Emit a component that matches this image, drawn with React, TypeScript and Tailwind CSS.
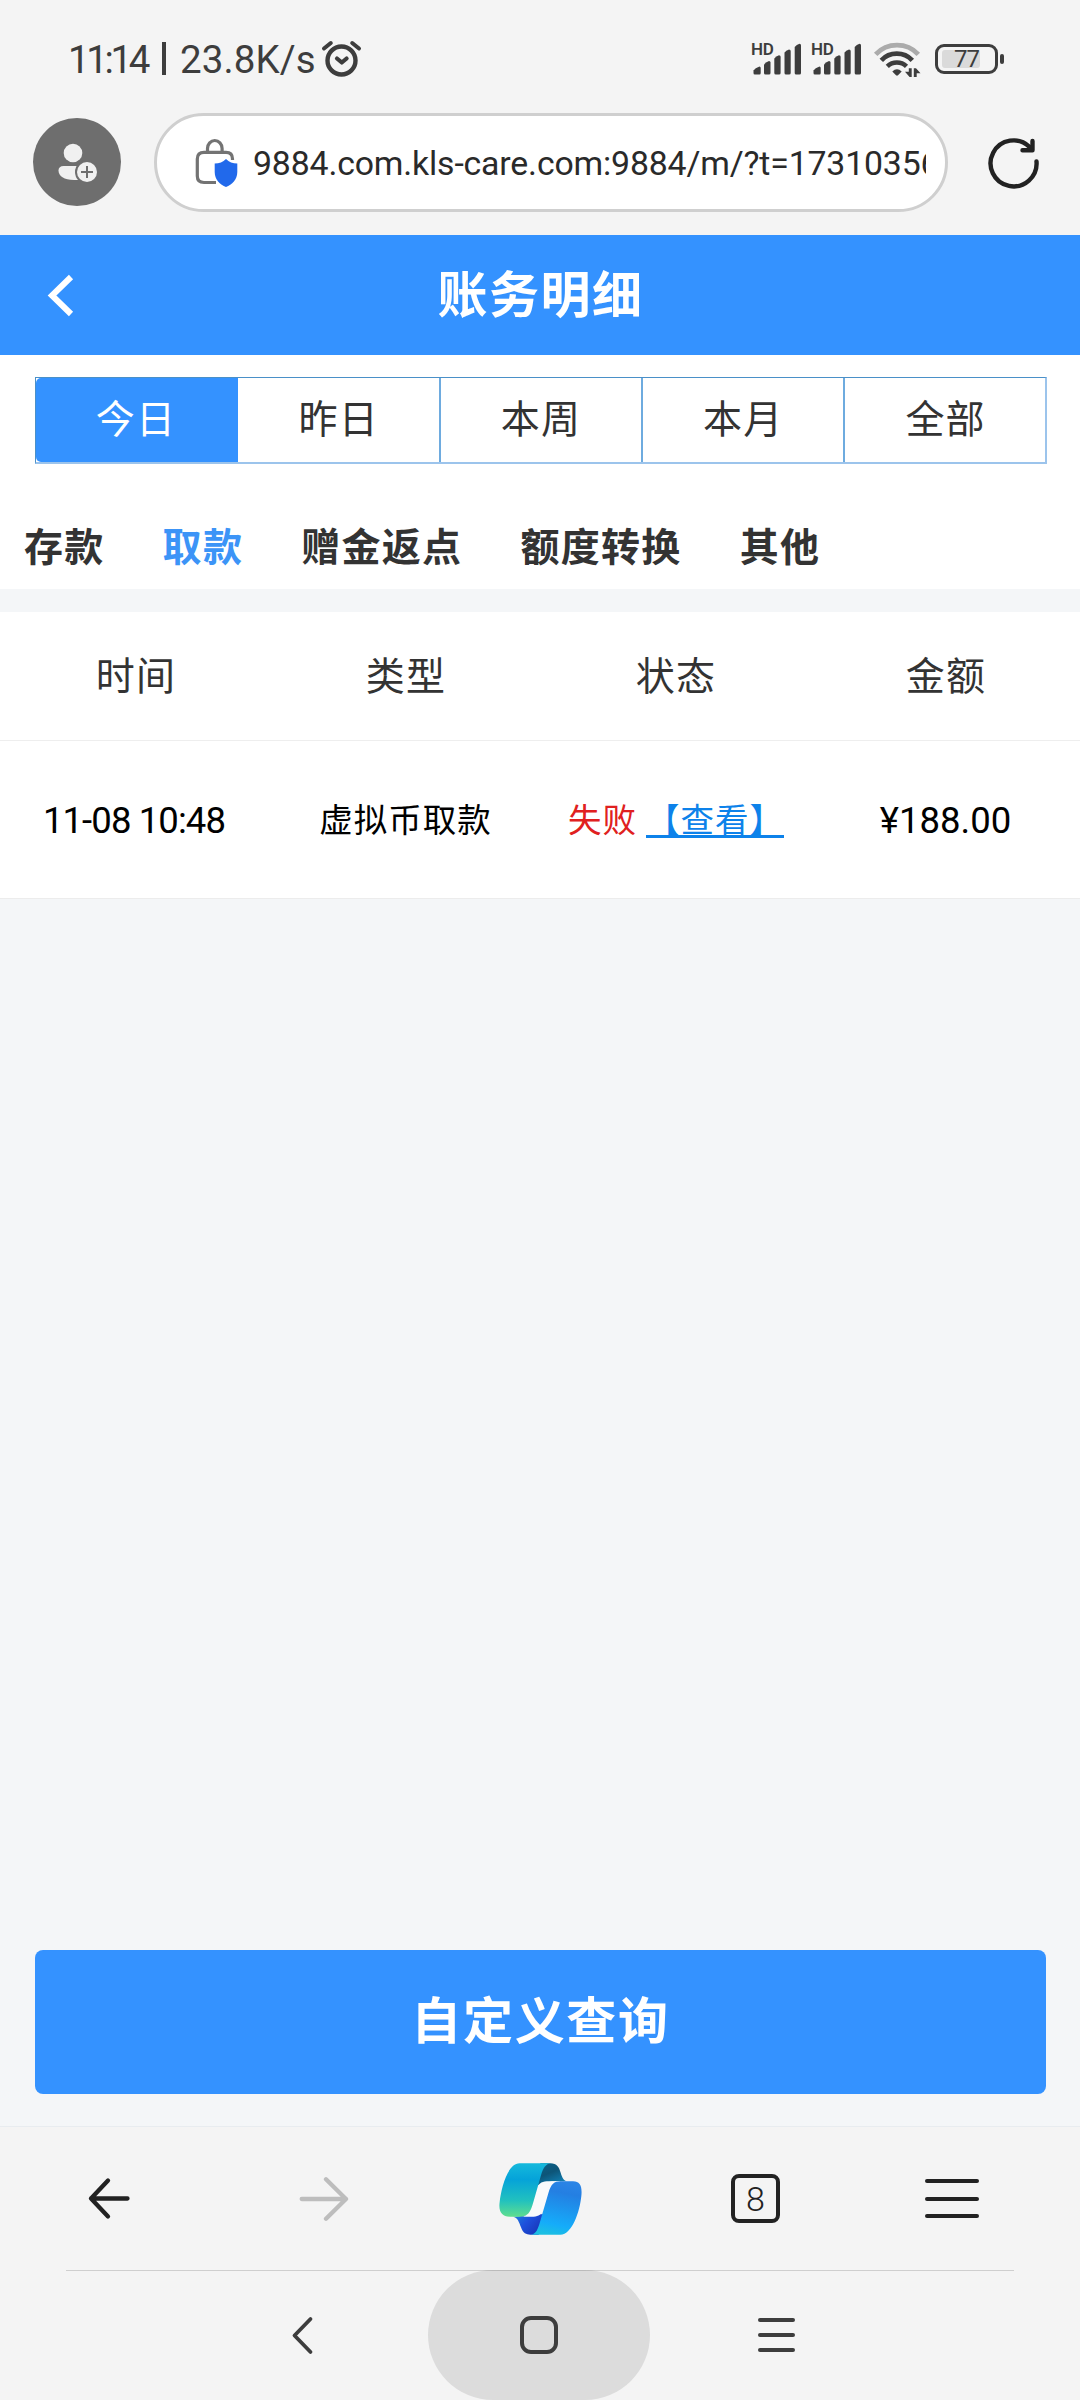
import React from "react";

const periods = ["今日", "昨日", "本周", "本月", "全部"];
const categories = ["存款", "取款", "赠金返点", "额度转换", "其他"];
const columns = ["时间", "类型", "状态", "金额"];

const periodStyles = [
  "rounded-l-[5px] bg-[#3492ff] pr-[2px] text-white",
  "text-[#333]",
  "-ml-px border-l-2 border-[#6eabdf] text-[#333]",
  "border-l-2 border-[#6eabdf] text-[#333]",
  "border-l-2 border-[#6eabdf] pl-px text-[#333]",
];

function AlarmIcon() {
  return (
    <svg className="h-[38px] w-[42px]" viewBox="0 0 42 38" fill="none" stroke="#3d3d3d" strokeLinecap="round">
      <circle cx="20.500" cy="20.500" r="14" strokeWidth="4.400" />
      <path d="M3 8.500 L9.800 3 M31.200 3 L38 8.500" strokeWidth="4" />
      <path d="M16 18.500 L20.800 22.500 L25.600 18.500" strokeWidth="4.200" strokeLinejoin="round" />
    </svg>
  );
}

function SignalIcon() {
  return (
    <div className="relative h-[34px] w-[60px] shrink-0">
      <span className="absolute left-0 top-0 text-[17px] font-semibold leading-[14px] tracking-[-0.2px]">HD</span>
      <svg className="h-[34px] w-[60px]" viewBox="0 0 60 34" fill="#3d3d3d">
        <path d="M2.500 31 V28.500 Q4 26 8.500 24.500 Q9.700 24.500 9.700 26 V31 Q9.700 32.500 8.500 32.500 H3.800 Q2.500 32.500 2.500 31Z" />
        <path d="M13 31 V22.500 Q14.500 20 18 19 Q19.500 19 19.500 20.500 V31 Q19.500 32.500 18 32.500 H14.500 Q13 32.500 13 31Z" />
        <path d="M23.300 31 V16.500 Q25 14.300 28 13.300 Q29.600 13.300 29.600 14.800 V31 Q29.600 32.500 28 32.500 H24.800 Q23.300 32.500 23.300 31Z" />
        <path d="M33.500 31 V10.500 Q35 8.300 38 7.500 Q39.700 7.500 39.700 9 V31 Q39.700 32.500 38 32.500 H35 Q33.500 32.500 33.500 31Z" />
        <path d="M43.700 31 V5 Q45.500 2.500 48.500 1.800 Q50 1.800 50 3.300 V31 Q50 32.500 48.500 32.500 H45.200 Q43.700 32.500 43.700 31Z" />
      </svg>
    </div>
  );
}

function WifiIcon() {
  return (
    <svg className="h-[36px] w-[48px]" viewBox="0 0 48 36" fill="none">
      <path d="M2.700 12.300 A29.300 29.300 0 0 1 45.300 12.300" stroke="#ababab" strokeWidth="4.800" />
      <path d="M8.300 18.300 A21.300 21.300 0 0 1 39.300 18.300" stroke="#3d3d3d" strokeWidth="4.800" />
      <path d="M14.300 24.300 A14 14 0 0 1 33.500 24.300" stroke="#3d3d3d" strokeWidth="4.600" />
      <path d="M19.300 29.500 Q24 25 28.700 29.500 L25 33.300 Q24 34.200 23 33.300Z" fill="#3d3d3d" />
      <path d="M38.700 26.300 V35 H36.600 L32 29.800 H35.800 V26.300Z M40.800 35 V26.300 H43 L47.500 31.300 H43.700 V35Z" fill="#3d3d3d" />
    </svg>
  );
}

function Battery() {
  return (
    <div className="flex items-center gap-[2px]">
      <div className="relative flex h-[30px] w-[63px] items-center justify-center rounded-[9px] border-[3px] border-[#3d3d3d]">
        <div className="absolute left-[4px] top-[3px] h-[18px] w-[38px] rounded-[3px] bg-[#dadada]" />
        <span className="relative text-[24px] leading-none tracking-[-1px]">77</span>
      </div>
      <div className="h-[10px] w-[4px] rounded-[2px] bg-[#3d3d3d]" />
    </div>
  );
}

function StatusBar() {
  return (
    <div className="flex h-[113px] items-start text-[#3d3d3d]">
      <div className="ml-[68px] mt-[37px] flex w-[254px] whitespace-nowrap text-[38.500px] leading-[45px]">
        <span className="w-[94px] tracking-[-3.400px]">11:14</span>
        <span className="mt-[5px] h-[33px] w-[4px] bg-[#3d3d3d]" />
        <span className="ml-[14px] tracking-[0.100px]">23.8K/s</span>
      </div>
      <div className="mt-[40px] -ml-[1px]">
        <AlarmIcon />
      </div>
      <div className="ml-auto mr-[76px] mt-[42px] flex items-start">
        <SignalIcon />
        <SignalIcon />
        <div className="ml-[2px]">
          <WifiIcon />
        </div>
        <div className="ml-[14px] mt-[2px]">
          <Battery />
        </div>
      </div>
    </div>
  );
}

function AddressBar() {
  return (
    <div className="flex h-[122px] items-start">
      <div className="ml-[33px] mt-[5px] h-[88px] w-[88px] rounded-full bg-[#6e6e6e]">
        <svg className="h-[88px] w-[88px]" viewBox="0 0 88 88">
          <circle cx="40" cy="35" r="9.300" fill="#f0f0f0" />
          <path d="M30.500 48 H50 V62 H41 C31 62 25.500 58 25.500 52.500 C25.500 49.500 27.500 48 30.500 48Z" fill="#f0f0f0" />
          <circle cx="54" cy="54" r="12" fill="#6e6e6e" />
          <circle cx="54" cy="54" r="10" fill="#f0f0f0" />
          <path d="M54 48 V60 M48 54 H60" stroke="#6e6e6e" strokeWidth="2" />
        </svg>
      </div>
      <div className="ml-[33px] flex h-[99px] w-[794px] items-center rounded-full border-[3px] border-[#cfcfcf] bg-white">
        <svg className="ml-[38px] h-[50px] w-[46px] shrink-0" viewBox="0 0 46 50" fill="none">
          <path d="M12.500 14 V10.500 A7.300 8 0 0 1 27.100 10.500 V14" stroke="#737373" strokeWidth="3.200" />
          <path d="M37.500 22 V21 Q37.500 14.300 31 14.300 H9 Q2.300 14.300 2.300 21 V38 Q2.300 44.500 9 44.500 H21" stroke="#737373" strokeWidth="3.200" />
          <path d="M31 21 Q35.500 25.500 42.300 25.500 V34 C42.300 42 37 46.500 31 49 C25 46.500 19.700 42 19.700 34 V25.500 Q26.500 25.500 31 21Z" fill="#2169eb" />
        </svg>
        <div className="ml-[12px] mt-[2px] w-[673px] overflow-hidden whitespace-nowrap text-[33.800px] leading-[44px] tracking-[-0.150px] text-[#2a2a2a]">
          9884.com.kls-care.com:9884/m/?t=17310356
        </div>
      </div>
      <svg className="ml-[39px] mt-[24px] h-[54px] w-[54px]" viewBox="0 0 54 54" fill="none" stroke="#222" strokeWidth="4.400" strokeLinecap="round" strokeLinejoin="round">
        <path d="M49.500 24.500 A23 23 0 1 1 42.500 9.800 L44.500 12.500" />
        <path d="M45.500 4 V13.300 H35.500" />
      </svg>
    </div>
  );
}

function CopilotLogo() {
  return (
    <svg className="h-[72px] w-[83px]" viewBox="56 69 249 216">
      <defs>
        <linearGradient id="teal" x1="0" y1="0" x2="0" y2="1">
          <stop offset="0" stopColor="#15b9dc" />
          <stop offset="0.300" stopColor="#05a3d9" />
          <stop offset="0.700" stopColor="#22c1be" />
          <stop offset="1" stopColor="#5fde8e" />
        </linearGradient>
        <linearGradient id="blue" x1="0.600" y1="0" x2="0.400" y2="1">
          <stop offset="0" stopColor="#2a84e6" />
          <stop offset="0.200" stopColor="#247fe2" />
          <stop offset="0.800" stopColor="#15acfa" />
          <stop offset="1" stopColor="#1cbfe2" />
        </linearGradient>
        <linearGradient id="foldTop" x1="0" y1="0" x2="0.600" y2="1">
          <stop offset="0" stopColor="#0a5f88" />
          <stop offset="0.500" stopColor="#0d5578" />
          <stop offset="1" stopColor="#1180b5" />
        </linearGradient>
        <linearGradient id="foldBottom" x1="0" y1="0" x2="1" y2="0.600">
          <stop offset="0" stopColor="#1d83dc" />
          <stop offset="0.500" stopColor="#1e50dc" />
          <stop offset="1" stopColor="#1836b8" />
        </linearGradient>
      </defs>
      <path d="M180 70 H210 C230 70 236 82 241 98 C246 114 250 124 264 124 H214 L170 136Z" fill="url(#foldTop)" />
      <path d="M98 230 C112 232 116 246 122 262 C128 280 138 284 150 284 H175 L190 222Z" fill="url(#foldBottom)" />
      <path d="M240 124 H214 C192 124 180 124 173 140 L158 190 C150 218 142 230 122 230 H160 C176 230 184 222 188 208Z" fill="#f9fafb" />
      <path d="M118 70 H212 C196 71 188 86 182 106 L158 190 C150 218 142 230 118 230 H88 C64 230 54 214 58 186 C62 150 80 70 118 70Z" fill="url(#teal)" />
      <path d="M278 124 C300 124 306 140 303 168 C298 215 276 284 240 284 H150 C168 283 173 266 180 242 L204 160 C212 132 222 124 240 124Z" fill="url(#blue)" />
    </svg>
  );
}

function BrowserToolbar() {
  return (
    <div className="h-[144px] border-t border-[#e8ecf0]">
      <div className="flex h-[143px] items-center">
        <svg className="ml-[87px] h-[44px] w-[43px]" viewBox="0 0 43 44" fill="none" stroke="#222" strokeWidth="4.300" strokeLinecap="round" strokeLinejoin="round">
          <path d="M40.500 21.500 H4 M21 3.500 L4 21.500 L21 39.500" />
        </svg>
        <svg className="ml-[169px] h-[46px] w-[50px]" viewBox="0 0 50 46" fill="none" stroke="#bdbdbd" strokeWidth="4.300" strokeLinecap="round" strokeLinejoin="round">
          <path d="M2.700 23 H47 M27 3.200 L47 23 L27 42.800" />
        </svg>
        <div className="ml-[150px]">
          <CopilotLogo />
        </div>
        <div className="ml-[149px] flex h-[49px] w-[49px] items-center justify-center rounded-[8px] border-4 border-[#222] text-[34px] font-light leading-none text-[#222]">
          8
        </div>
        <div className="ml-[145px] flex w-[54px] flex-col gap-[13.500px]">
          <div className="h-[4px] rounded-full bg-[#222]" />
          <div className="h-[4px] rounded-full bg-[#222]" />
          <div className="h-[4px] rounded-full bg-[#222]" />
        </div>
      </div>
    </div>
  );
}

function SystemNav() {
  return (
    <div className="flex h-[130px] items-center">
      <svg className="ml-[290px] h-[40px] w-[24px]" viewBox="0 0 24 40" fill="none" stroke="#3d3d3d" strokeWidth="3.800" strokeLinecap="round" strokeLinejoin="round">
        <path d="M20.500 4 L4.500 20.500 L20.500 37" />
      </svg>
      <div className="ml-[114px] flex h-[130px] w-[222px] items-center justify-center rounded-full bg-[#dcdcdc]">
        <div className="h-[38px] w-[38px] rounded-[11px] border-4 border-[#3d3d3d]" />
      </div>
      <div className="ml-[108px] flex w-[37px] flex-col gap-[11px]">
        <div className="h-[4px] rounded-full bg-[#3d3d3d]" />
        <div className="h-[4px] rounded-full bg-[#3d3d3d]" />
        <div className="h-[4px] rounded-full bg-[#3d3d3d]" />
      </div>
    </div>
  );
}

export default function App() {
  return (
    <div className="flex h-[2400px] w-[1080px] flex-col overflow-hidden bg-[#f4f4f4] font-[Roboto,'Noto_Sans_CJK_SC',sans-serif]">
      <StatusBar />
      <AddressBar />

      <header className="relative flex h-[120px] items-center justify-center bg-[#3492ff] text-white">
        <svg className="absolute left-[46px] top-[38px] h-[44px] w-[28px]" viewBox="0 0 28 44" fill="none" stroke="#fff" strokeWidth="6">
          <path d="M25 4 L6 22.500 L25 41" />
        </svg>
        <h1 className="pl-px pt-[2px] text-[50px] font-bold leading-[60px] tracking-[1.500px]">账务明细</h1>
      </header>

      <main className="flex flex-1 flex-col bg-[#f4f6f8]">
        <section className="h-[234px] bg-white pt-[22px]">
          <div className="mx-[35px] grid h-[87px] w-[1012px] grid-cols-5 border-b-2 border-l border-r-2 border-t border-b-[#9cc4ec] border-l-[#4a90c8] border-r-[#9cc4ec] border-t-[#4a90c8] text-[39px] tracking-[1.200px]">
            {periods.map((p, i) => (
              <div key={p} className={`flex items-center justify-center ${periodStyles[i]}`}>
                {p}
              </div>
            ))}
          </div>
          <nav className="mt-[56px] flex gap-[58px] pl-[24px] text-[39px] font-bold leading-[56px] tracking-[1.300px]">
            {categories.map((c, i) => (
              <span key={c} className={i === 1 ? "text-[#3c94f7]" : "text-[#333]"}>
                {c}
              </span>
            ))}
          </nav>
        </section>

        <section className="mt-[23px] bg-white">
          <div className="grid h-[129px] grid-cols-4 items-center border-b border-[#eeeeee] pt-[3px] text-center text-[39px] tracking-[1.200px] text-[#333]">
            {columns.map((c) => (
              <div key={c} className="pl-[2px]">
                {c}
              </div>
            ))}
          </div>
          <div className="grid h-[158px] grid-cols-4 items-center border-b border-[#ececec] pt-[4px] text-center text-[33.500px] tracking-[1px] text-black">
            <div className="pr-[2px] text-[36.500px] tracking-[-0.900px]">11-08 10:48</div>
            <div className="pl-px">虚拟币取款</div>
            <div className="flex items-center justify-center gap-[9px] pl-[2px]">
              <span className="text-[#e02020]">失败</span>
              <a className="text-[#0d82ea] underline decoration-[3px] underline-offset-[3px] [text-decoration-skip-ink:none]">【查看】</a>
            </div>
            <div className="pl-px text-[36.500px] tracking-normal">¥188.00</div>
          </div>
        </section>

        <button className="mx-[35px] mb-[32px] mt-auto h-[144px] w-[1011px] rounded-[8px] bg-[#3492ff] pt-px text-[50px] font-bold tracking-[1.700px] text-white">
          自定义查询
        </button>
      </main>

      <BrowserToolbar />
      <div className="relative">
        <SystemNav />
        <div className="absolute left-[66px] top-0 h-px w-[948px] bg-black/15" />
      </div>
    </div>
  );
}
